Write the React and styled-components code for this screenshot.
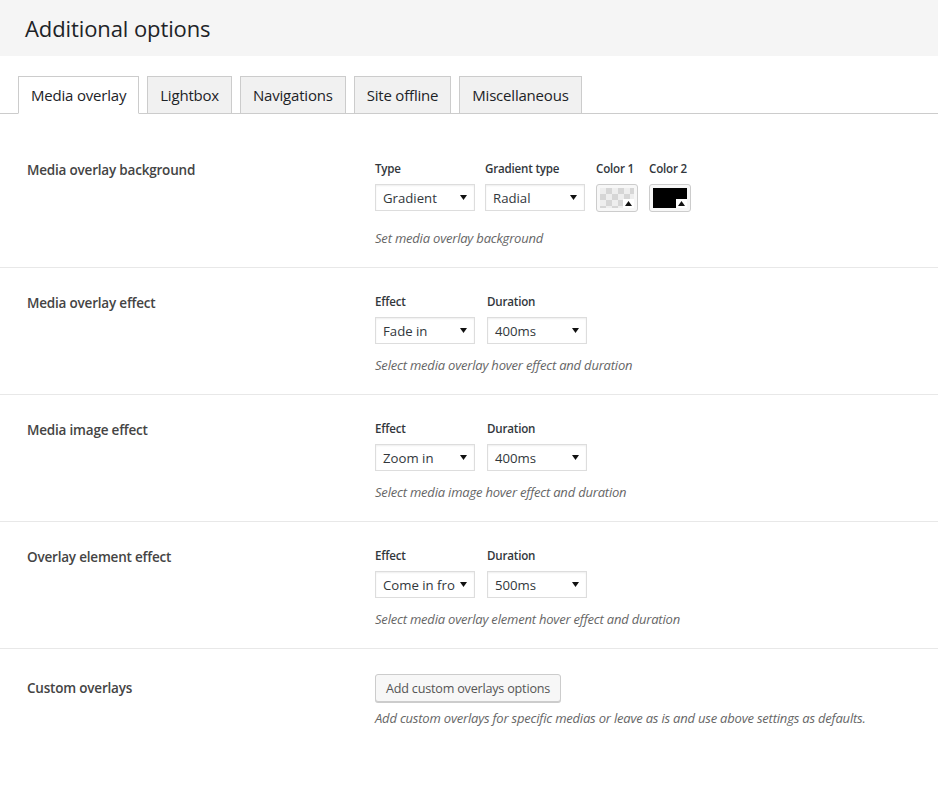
import React from 'react';
import styled, { createGlobalStyle } from 'styled-components';

const GlobalStyle = createGlobalStyle`
  body {
    margin: 0;
    background: #fff;
    font-family: "Open Sans", "Noto Sans", sans-serif;
    color: #444;
  }
`;

const tabs = ['Media overlay', 'Lightbox', 'Navigations', 'Site offline', 'Miscellaneous'];

const rows = [
  {
    label: 'Media overlay background',
    fields: [
      { name: 'Type', value: 'Gradient' },
      { name: 'Gradient type', value: 'Radial' },
    ],
    colors: [
      { name: 'Color 1', transparent: true },
      { name: 'Color 2', color: '#000' },
    ],
    desc: 'Set media overlay background',
  },
  {
    label: 'Media overlay effect',
    fields: [
      { name: 'Effect', value: 'Fade in' },
      { name: 'Duration', value: '400ms' },
    ],
    desc: 'Select media overlay hover effect and duration',
  },
  {
    label: 'Media image effect',
    fields: [
      { name: 'Effect', value: 'Zoom in' },
      { name: 'Duration', value: '400ms' },
    ],
    desc: 'Select media image hover effect and duration',
  },
  {
    label: 'Overlay element effect',
    fields: [
      { name: 'Effect', value: 'Come in fro' },
      { name: 'Duration', value: '500ms' },
    ],
    desc: 'Select media overlay element hover effect and duration',
  },
];

const Caret = ({ up }) => (
  <CaretIcon width="7" height="5" viewBox="0 0 7 5">
    <path d={up ? 'M0 5 L3.5 0 L7 5 Z' : 'M0 0 L7 0 L3.5 5 Z'} fill="#111" />
  </CaretIcon>
);

const App = () => {
  return (
    <Page>
      <GlobalStyle />
      <Header>
        <Title>Additional options</Title>
      </Header>

      <TabBar>
        {tabs.map((t, i) => (
          <Tab key={t} $active={i === 0}>{t}</Tab>
        ))}
      </TabBar>

      <Form>
        {rows.map((row) => (
          <Row key={row.label}>
            <RowLabel>{row.label}</RowLabel>
            <Controls>
              <FieldGroup $gap={row.colors ? 10 : 12}>
                {row.fields.map((f) => (
                  <Field key={f.name}>
                    <FieldName>{f.name}</FieldName>
                    <SelectBox>
                      <SelectValue>{f.value}</SelectValue>
                      <Caret />
                    </SelectBox>
                  </Field>
                ))}
                {row.colors && row.colors.map((c) => (
                  <ColorField key={c.name}>
                    <FieldName>{c.name}</FieldName>
                    <Swatch>
                      <SwatchFill $transparent={c.transparent} $color={c.color} />
                      <SwatchToggle><Caret up /></SwatchToggle>
                    </Swatch>
                  </ColorField>
                ))}
              </FieldGroup>
              <Description $gap={row.colors ? 17 : 12}>{row.desc}</Description>
            </Controls>
          </Row>
        ))}

        <Row $last>
          <RowLabel $offset={4}>Custom overlays</RowLabel>
          <Controls>
            <Button type="button">Add custom overlays options</Button>
            <Description $gap={7}>
              Add custom overlays for specific medias or leave as is and use above settings as defaults.
            </Description>
          </Controls>
        </Row>
      </Form>
    </Page>
  );
};

const Page = styled.div`
  width: 100%;
  min-height: 790px;
  background: #fff;
`;

const Header = styled.div`
  height: 56px;
  background: #f5f5f5;
  display: flex;
  align-items: center;
  padding-left: 25px;
`;

const Title = styled.h1`
  margin: 0;
  font-size: 22px;
  font-weight: 500;
  color: #1d2327;
  letter-spacing: -0.1px;
`;

const TabBar = styled.div`
  display: flex;
  gap: 8px;
  margin-top: 20px;
  padding-left: 18px;
  border-bottom: 1px solid #ccc;
`;

const Tab = styled.div`
  height: 36px;
  padding: 0 12px;
  display: flex;
  align-items: center;
  font-size: 15px;
  color: #1d2327;
  background: ${(p) => (p.$active ? '#fff' : '#f1f1f1')};
  border: 1px solid #ccc;
  border-bottom-color: ${(p) => (p.$active ? '#fff' : '#ccc')};
  margin-bottom: -1px;
  letter-spacing: -0.2px;
`;

const Form = styled.div`
  padding-top: 21px;
`;

const Row = styled.div`
  display: grid;
  grid-template-columns: 375px 1fr;
  padding: 25px 0 20px;
  border-bottom: ${(p) => (p.$last ? 'none' : '1px solid #e8e8e8')};
`;

const RowLabel = styled.div`
  padding-left: 27px;
  padding-top: ${(p) => (p.$offset || 0) + 1}px;
  font-size: 13.5px;
  line-height: 18px;
  font-weight: 600;
  color: #444;
  letter-spacing: -0.2px;
`;

const Controls = styled.div`
  display: flex;
  flex-direction: column;
  align-items: flex-start;
`;

const FieldGroup = styled.div`
  display: flex;
  gap: ${(p) => p.$gap}px;
`;

const Field = styled.div`
  display: flex;
  flex-direction: column;
  gap: 6px;
  width: 100px;
`;

const ColorField = styled.div`
  display: flex;
  flex-direction: column;
  gap: 6px;
  margin-left: 1px;
`;

const FieldName = styled.div`
  font-size: 11.6px;
  line-height: 18px;
  font-weight: 600;
  color: #32373c;
  letter-spacing: -0.2px;
`;

const SelectBox = styled.div`
  box-sizing: border-box;
  height: 27px;
  width: 100px;
  border: 1px solid #ddd;
  box-shadow: inset 0 1px 2px rgba(0, 0, 0, 0.07);
  display: flex;
  align-items: center;
  gap: 2px;
  padding: 0 7px 0 7px;
  font-size: 13.2px;
  color: #32373c;
  background: #fff;
`;

const SelectValue = styled.span`
  flex: 1;
  white-space: nowrap;
`;

const CaretIcon = styled.svg`
  flex-shrink: 0;
`;

const Swatch = styled.div`
  position: relative;
  box-sizing: border-box;
  width: 42px;
  height: 28px;
  border: 1px solid #ccc;
  border-radius: 3px;
  padding: 3px;
  background: #f7f7f7;
`;

const SwatchFill = styled.div`
  width: 100%;
  height: 100%;
  background-color: ${(p) => (p.$transparent ? '#eee' : p.$color)};
  background-image: ${(p) =>
    p.$transparent
      ? 'linear-gradient(45deg, #d6d6d6 25%, transparent 25%, transparent 75%, #d6d6d6 75%), linear-gradient(45deg, #d6d6d6 25%, transparent 25%, transparent 75%, #d6d6d6 75%)'
      : 'none'};
  background-size: 12px 12px;
  background-position: 0 0, 6px 6px;
`;

const SwatchToggle = styled.div`
  position: absolute;
  right: 3px;
  bottom: 3px;
  width: 11px;
  height: 9px;
  background: #fff;
  display: flex;
  align-items: center;
  justify-content: center;
`;

const Button = styled.button`
  box-sizing: border-box;
  height: 28px;
  padding: 0 10px;
  background: #f7f7f7;
  border: 1px solid #ccc;
  border-radius: 3px;
  box-shadow: 0 1px 0 #ccc;
  font-family: "Open Sans", "Noto Sans", sans-serif;
  font-size: 12.6px;
  color: #555;
  letter-spacing: -0.2px;
`;

const Description = styled.p`
  margin: ${(p) => p.$gap}px 0 0;
  font-size: 13px;
  line-height: 18px;
  font-style: italic;
  color: #666;
  letter-spacing: -0.2px;
`;

export default App;
